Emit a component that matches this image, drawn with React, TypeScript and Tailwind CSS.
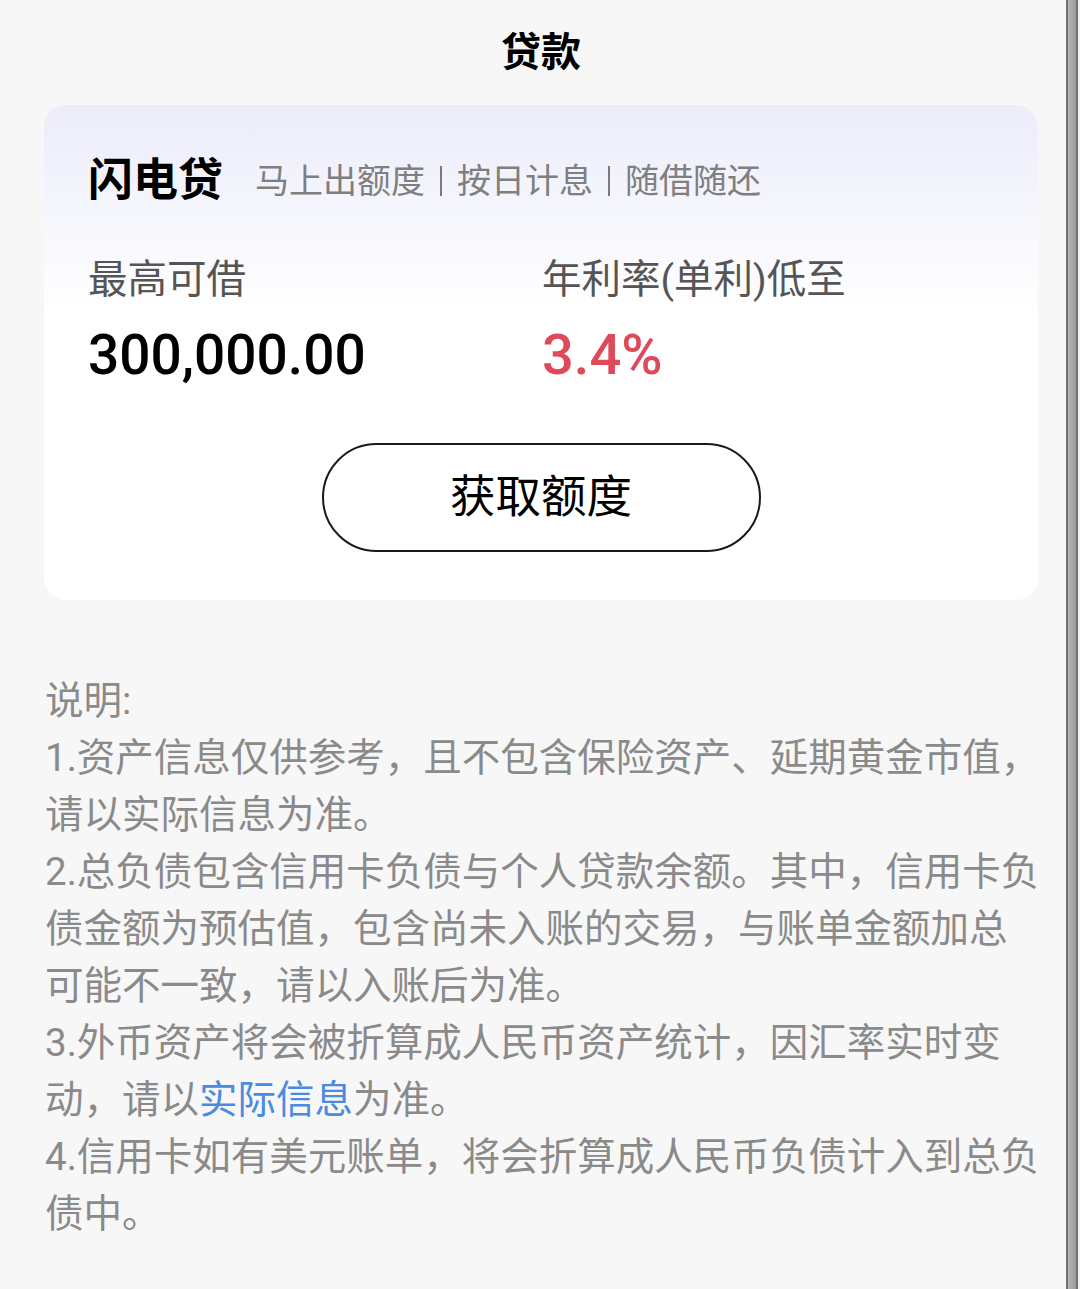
const CN = "font-['Roboto','Noto_Sans_CJK_SC',sans-serif]";

const NOTES = [
  ["说明:"],
  ["1.资产信息仅供参考，且不包含保险资产、延期黄金市值，", "请以实际信息为准。"],
  [
    "2.总负债包含信用卡负债与个人贷款余额。其中，信用卡负",
    "债金额为预估值，包含尚未入账的交易，与账单金额加总",
    "可能不一致，请以入账后为准。",
  ],
];

const TAGS = ["马上出额度", "按日计息", "随借随还"];

export default function App() {
  return (
    <div className={`flex min-h-[1289px] w-[1080px] bg-[#f7f7f7] ${CN}`}>
      <main className="w-[1066px]">
        <header className="flex h-[105px] items-center justify-center pl-[16px]">
          <h1 className="text-[40px] font-bold leading-none text-black">贷款</h1>
        </header>

        <section className="ml-[44px] mr-[28px] rounded-[22px] bg-gradient-to-b from-[#ececfb] via-white via-[42%] to-white pb-[48px] pl-[44px]">
          <div className="flex items-center pt-[50px]">
            <span className="text-[45px] font-bold leading-[52px] text-black">闪电贷</span>
            <span className="ml-[32px] flex items-center text-[34px] leading-[52px] text-[#7f7f7f]">
              {TAGS.map((t, i) => (
                <span key={t} className="flex items-center">
                  {i > 0 && <span className="mx-[15px] h-[30px] w-[2px] bg-[#7a7a7a]" />}
                  {t}
                </span>
              ))}
            </span>
          </div>

          <div className="mt-[48px] grid grid-cols-[454px_1fr]">
            <div className="text-[39.5px] leading-[50px] text-[#555]">最高可借</div>
            <div className="text-[39.5px] leading-[50px] text-[#555]">年利率(单利)低至</div>
            <div className="mt-[18px] text-[55px] font-medium leading-[64px] text-black">
              300,000.00
            </div>
            <div className="mt-[18px] text-[56px] font-medium leading-[64px] text-[#df4a5b]">
              3.4%
            </div>
          </div>

          <div className="-ml-[44px] mt-[56px] flex justify-center">
            <button className="flex h-[109px] w-[439px] items-center justify-center rounded-full border-2 border-[#1a1a1a] bg-white text-[45.5px] leading-none text-black">
              获取额度
            </button>
          </div>
        </section>

        <div className="mt-[72px] px-[45px] pb-[40px] text-[38.5px] leading-[57px] text-[#8a8a8a]">
          {NOTES.map((lines, i) => (
            <p key={i}>
              {lines.map((l) => (
                <span key={l} className="block whitespace-nowrap">
                  {l}
                </span>
              ))}
            </p>
          ))}
          <p>
            <span className="block whitespace-nowrap">3.外币资产将会被折算成人民币资产统计，因汇率实时变</span>
            <span className="block whitespace-nowrap">
              动，请以<span className="text-[#4a8be0]">实际信息</span>为准。
            </span>
          </p>
          <p>
            <span className="block whitespace-nowrap">4.信用卡如有美元账单，将会折算成人民币负债计入到总负</span>
            <span className="block whitespace-nowrap">债中。</span>
          </p>
        </div>
      </main>

      <div className="w-[12px] border-x-2 border-x-[#6f6f6f] bg-gradient-to-r from-[#b4b4b4] to-[#9a9a9a]" />
      <div className="w-[2px] bg-[#f2f2f2]" />
    </div>
  );
}
